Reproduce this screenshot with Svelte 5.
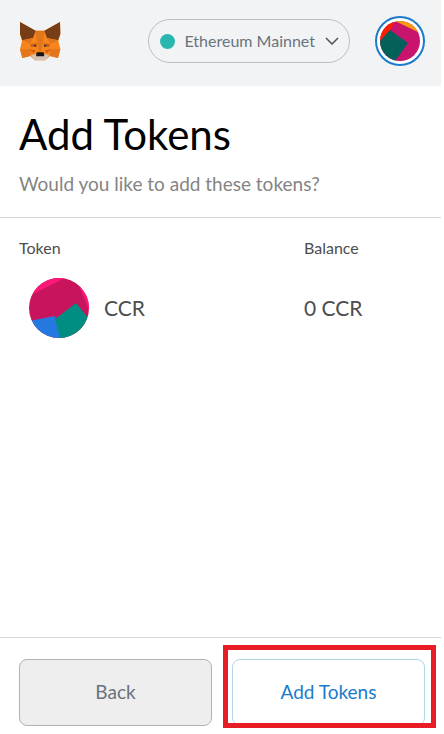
<script>
  const network = "Ethereum Mainnet";

  let tokens = [{ symbol: "CCR", balance: 0 }];
</script>

<style>
  :global(body) {
    margin: 0;
    background: #fff;
  }

  .popup {
    display: flex;
    flex-direction: column;
    min-height: 100vh;
    margin-right: 3px;
    font-family: Lato, "Open Sans", sans-serif;
    color: #4d4d4d;
  }

  button {
    font-family: inherit;
    cursor: pointer;
  }

  .app-header {
    display: flex;
    align-items: center;
    height: 86px;
    padding: 0 16px 4px 19px;
    box-sizing: border-box;
    background: #f2f3f4;
  }

  .fox {
    display: block;
    width: 43px;
    height: 41px;
  }

  .network {
    display: flex;
    align-items: center;
    height: 44px;
    margin-left: auto;
    padding: 0 10px 0 11px;
    border: 1px solid #bbc0c5;
    border-radius: 22px;
    background: none;
    color: #6a737d;
    font-size: 16px;
    line-height: 20px;
  }

  .dot {
    width: 15px;
    height: 15px;
    margin-right: 9px;
    border-radius: 50%;
    background: #29b6af;
  }

  .chevron {
    width: 14px;
    height: 8px;
    margin-left: 10px;
  }

  .account {
    width: 50px;
    height: 50px;
    margin-left: 25px;
    padding: 3px;
    border: 2px solid #1b7bcb;
    border-radius: 50%;
    background: #fff;
  }

  .account svg,
  .symbol svg {
    display: block;
    border-radius: 50%;
  }

  .page-header {
    padding: 24px 19px 21px;
    border-bottom: 1px solid #d2d8dd;
  }

  h1 {
    margin: 0;
    color: #000;
    font-size: 42px;
    font-weight: 400;
    line-height: 48px;
  }

  .page-header p {
    margin: 14px 0 0;
    color: #848484;
    font-size: 19px;
    line-height: 24px;
  }

  .content {
    flex: 1;
    padding: 20px 19px;
  }

  table {
    width: 100%;
    border-collapse: collapse;
    table-layout: fixed;
  }

  th,
  td {
    padding: 0;
    text-align: left;
    font-weight: 400;
  }

  th {
    font-size: 16px;
    line-height: 20px;
  }

  th:last-child {
    width: 118px;
  }

  td {
    padding-top: 20px;
    font-size: 21px;
    line-height: 24px;
  }

  .symbol {
    display: flex;
    align-items: center;
    gap: 15px;
    padding-left: 10px;
  }

  footer {
    display: flex;
    gap: 20px;
    padding: 21px 16px 8px 19px;
    border-top: 1px solid #d2d8dd;
  }

  .action {
    position: relative;
    flex: 1;
    display: flex;
  }

  .action button {
    flex: 1;
    height: 67px;
    padding: 0 0 2px;
    border: 1px solid #b0b3b6;
    border-radius: 8px;
    background: #eee;
    color: #6a737d;
    font-size: 19px;
  }

  .action .confirm {
    border-color: #b0d7e8;
    background: #fff;
    color: #1b7bcb;
  }

  .highlight {
    position: absolute;
    inset: -14px -11px -2px -9px;
    border: 5px solid #e81c24;
    pointer-events: none;
  }
</style>

<div class="popup">
  <header class="app-header">
    <svg class="fox" viewBox="0 0 129 123" aria-hidden="true">
      <path fill="#f6851b" d="M3 3 49 29H77L123 3 124 40 118 60 124 85 117 111 93 105 79 118H48L34 105 10 111 3 85 9 60 3 40Z" />
      <path fill="#e2761b" d="M49 29H77L72 62 66 94H60L54 62Z" />
      <path fill="#763d16" d="M3 3 50 29 42 51 10 58 3 38ZM123 3 76 29 84 51 117 58 124 38Z" />
      <path fill="#e2761b" d="M10 58 42 51 33 68ZM117 58 84 51 94 68Z" />
      <path fill="#e4761b" d="M3 85H34L34 105 10 111ZM124 85H93L93 105 117 111Z" />
      <path fill="#cd6116" d="M33 70 53 66 52 78 37 78ZM94 70 74 66 75 78 90 78ZM30 85 50 88 44 97ZM97 85 77 88 83 97Z" />
      <path fill="#233447" d="M42 73 51 71 52 78ZM85 73 76 71 75 78Z" />
      <path fill="#d7c1b3" d="M36 103 50 99H77L91 103 79 118H48Z" />
      <path fill="#161616" d="M53 94H74L76 106H51Z" />
    </svg>

    <button class="network">
      <span class="dot"></span>
      {network}
      <svg class="chevron" viewBox="0 0 14 8" fill="none" stroke="#4d5358" stroke-width="1.5" aria-hidden="true">
        <path d="M1 1 7 7 13 1" />
      </svg>
    </button>

    <button class="account" aria-label="Account">
      <svg width="40" height="40" viewBox="0 0 40 40" aria-hidden="true">
        <path fill="#c8146c" d="M0 0H40V40H0Z" />
        <path fill="#fa1e04" d="M0 0H15L10 9 0 23Z" />
        <path fill="#f69a10" d="M14 0H40V12L15 0Z" />
        <path fill="#04605a" d="M10 9 28 22 15 40H0V20Z" />
      </svg>
    </button>
  </header>

  <div class="page-header">
    <h1>Add Tokens</h1>
    <p>Would you like to add these tokens?</p>
  </div>

  <main class="content">
    <table>
      <thead>
        <tr>
          <th>Token</th>
          <th>Balance</th>
        </tr>
      </thead>
      <tbody>
        {#each tokens as token}
          <tr>
            <td>
              <div class="symbol">
                <svg width="60" height="60" viewBox="0 0 60 60" aria-hidden="true">
                  <path fill="#c8145c" d="M0 0H60V60H0Z" />
                  <path fill="#fb1877" d="M0 0H36L2 17ZM50 8 60 20V32Z" />
                  <path fill="#2478e0" d="M0 43 26 38 32 60H0Z" />
                  <path fill="#018e82" d="M26 41 47 25 60 41V60H31Z" />
                </svg>
                {token.symbol}
              </div>
            </td>
            <td>{token.balance} {token.symbol}</td>
          </tr>
        {/each}
      </tbody>
    </table>
  </main>

  <footer>
    <div class="action">
      <button>Back</button>
    </div>
    <div class="action">
      <button class="confirm">Add Tokens</button>
      <div class="highlight"></div>
    </div>
  </footer>
</div>
